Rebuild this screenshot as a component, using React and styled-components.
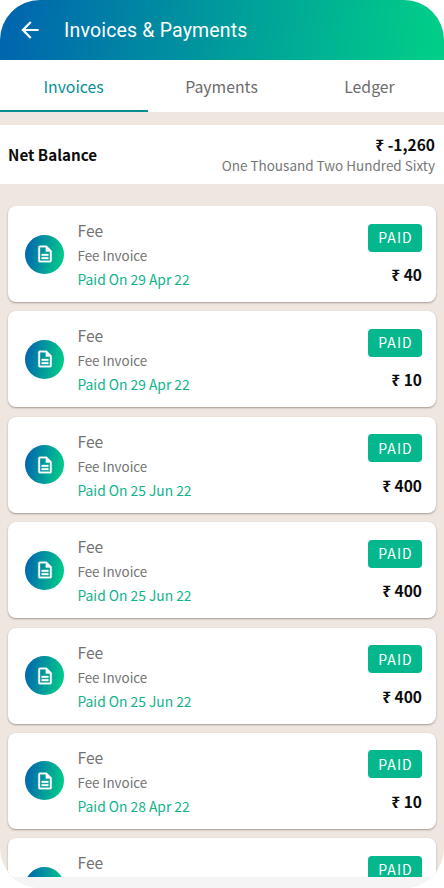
import React from "react"
import styled, { createGlobalStyle } from "styled-components"
import { MdArrowBack, MdOutlineDescription } from "react-icons/md"

const GlobalStyle = createGlobalStyle`
  * {
    box-sizing: border-box;
  }
  body {
    margin: 0;
    background: #fff;
    font-family: "Noto Sans CJK SC", "Noto Sans", sans-serif;
  }
`

const Screen = styled.div`
  width: 444px;
  height: 888px;
  display: flex;
  flex-direction: column;
  overflow: hidden;
  border-radius: 40px;
  background: #efe6e0;
`

const Header = styled.header`
  flex: none;
  height: 60px;
  padding: 0 0 0 17px;
  display: flex;
  align-items: center;
  gap: 21px;
  color: #fff;
  background: linear-gradient(97deg, #0067ae 3%, #00a19a 56%, #00ce88 98%);
`

const Title = styled.h1`
  margin: 0;
  padding-top: 2px;
  font: 400 19.5px/24px Roboto, sans-serif;
  letter-spacing: 0.18px;
`

const Tabs = styled.nav`
  flex: none;
  height: 52px;
  display: grid;
  grid-template-columns: repeat(3, 1fr);
  background: #fff;
`

const Tab = styled.div`
  display: flex;
  align-items: center;
  justify-content: center;
  padding: 2px 1px 0 0;
  border-bottom: 2px solid ${(p) => (p.$active ? "#078f93" : "transparent")};
  color: ${(p) => (p.$active ? "#078f93" : "#6b6b6b")};
  font-size: 15.8px;
`

const Balance = styled.section`
  flex: none;
  height: 59px;
  margin: 13px 0 22px;
  padding: 0 9px 0 8px;
  display: flex;
  align-items: center;
  justify-content: space-between;
  background: #fff;
`

const BalanceLabel = styled.div`
  padding-bottom: 2px;
  font-size: 15.2px;
  font-weight: 700;
  color: #0c0c0c;
`

const BalanceValue = styled.div`
  text-align: right;
`

const Amount = styled.div`
  font-size: 15.5px;
  line-height: 20px;
  font-weight: 700;
  color: #0c0c0c;
`

const Words = styled.div`
  font-size: 13.5px;
  line-height: 22px;
  color: #777;
`

const List = styled.main`
  flex: 1;
  min-height: 0;
  padding: 0 8px;
  display: flex;
  flex-direction: column;
  gap: 9.4px;
  overflow: hidden;
`

const Card = styled.article`
  flex: none;
  height: 96px;
  padding: 0 14px 0 17px;
  display: flex;
  align-items: flex-start;
  border-radius: 8px;
  background: #fff;
  box-shadow: 0 1px 2px rgba(70, 60, 50, 0.45);
`

const Badge = styled.div`
  width: 39px;
  height: 39px;
  margin: 28.5px 13.5px 0 0;
  display: flex;
  align-items: center;
  justify-content: center;
  border-radius: 50%;
  color: #fff;
  background: linear-gradient(100deg, #0065b0 5%, #00ce88 95%);

  path:last-child {
    stroke: #fff;
    stroke-width: 0.4px;
  }
`

const Details = styled.div`
  flex: 1;
  padding-top: 12px;
`

const Name = styled.div`
  font-size: 15.7px;
  line-height: 25px;
  color: #737373;
`

const Kind = styled.div`
  font-size: 13.4px;
  line-height: 25px;
  color: #737373;
`

const PaidOn = styled.div`
  font-size: 13.8px;
  line-height: 22px;
  color: #10b38a;
`

const Side = styled.div`
  padding-top: 17.5px;
  display: flex;
  flex-direction: column;
  align-items: flex-end;
  gap: 12.5px;
`

const Status = styled.div`
  width: 54px;
  height: 28px;
  padding: 0 0 1px 1px;
  display: flex;
  align-items: center;
  justify-content: center;
  border-radius: 4px;
  color: #fff;
  background: #04b78c;
  font-size: 14px;
  letter-spacing: 1.1px;
`

const BottomBar = styled.footer`
  flex: none;
  height: 11px;
  background: #f5f5f5;
`

const invoices = [
  { date: "29 Apr 22", amount: "40" },
  { date: "29 Apr 22", amount: "10" },
  { date: "25 Jun 22", amount: "400" },
  { date: "25 Jun 22", amount: "400" },
  { date: "25 Jun 22", amount: "400" },
  { date: "28 Apr 22", amount: "10" },
  {},
]

const Invoice = ({ date, amount }) => (
  <Card>
    <Badge>
      <MdOutlineDescription size={20} />
    </Badge>
    <Details>
      <Name>Fee</Name>
      {date && (
        <>
          <Kind>Fee Invoice</Kind>
          <PaidOn>Paid On {date}</PaidOn>
        </>
      )}
    </Details>
    <Side>
      <Status>PAID</Status>
      {amount && <Amount>₹ {amount}</Amount>}
    </Side>
  </Card>
)

const App = () => (
  <>
    <GlobalStyle />
    <Screen>
      <Header>
        <MdArrowBack size={26} />
        <Title>Invoices &amp; Payments</Title>
      </Header>
      <Tabs>
        <Tab $active>Invoices</Tab>
        <Tab>Payments</Tab>
        <Tab>Ledger</Tab>
      </Tabs>
      <Balance>
        <BalanceLabel>Net Balance</BalanceLabel>
        <BalanceValue>
          <Amount>₹ -1,260</Amount>
          <Words>One Thousand Two Hundred Sixty</Words>
        </BalanceValue>
      </Balance>
      <List>
        {invoices.map((invoice, i) => (
          <Invoice key={i} {...invoice} />
        ))}
      </List>
      <BottomBar />
    </Screen>
  </>
)

export default App
